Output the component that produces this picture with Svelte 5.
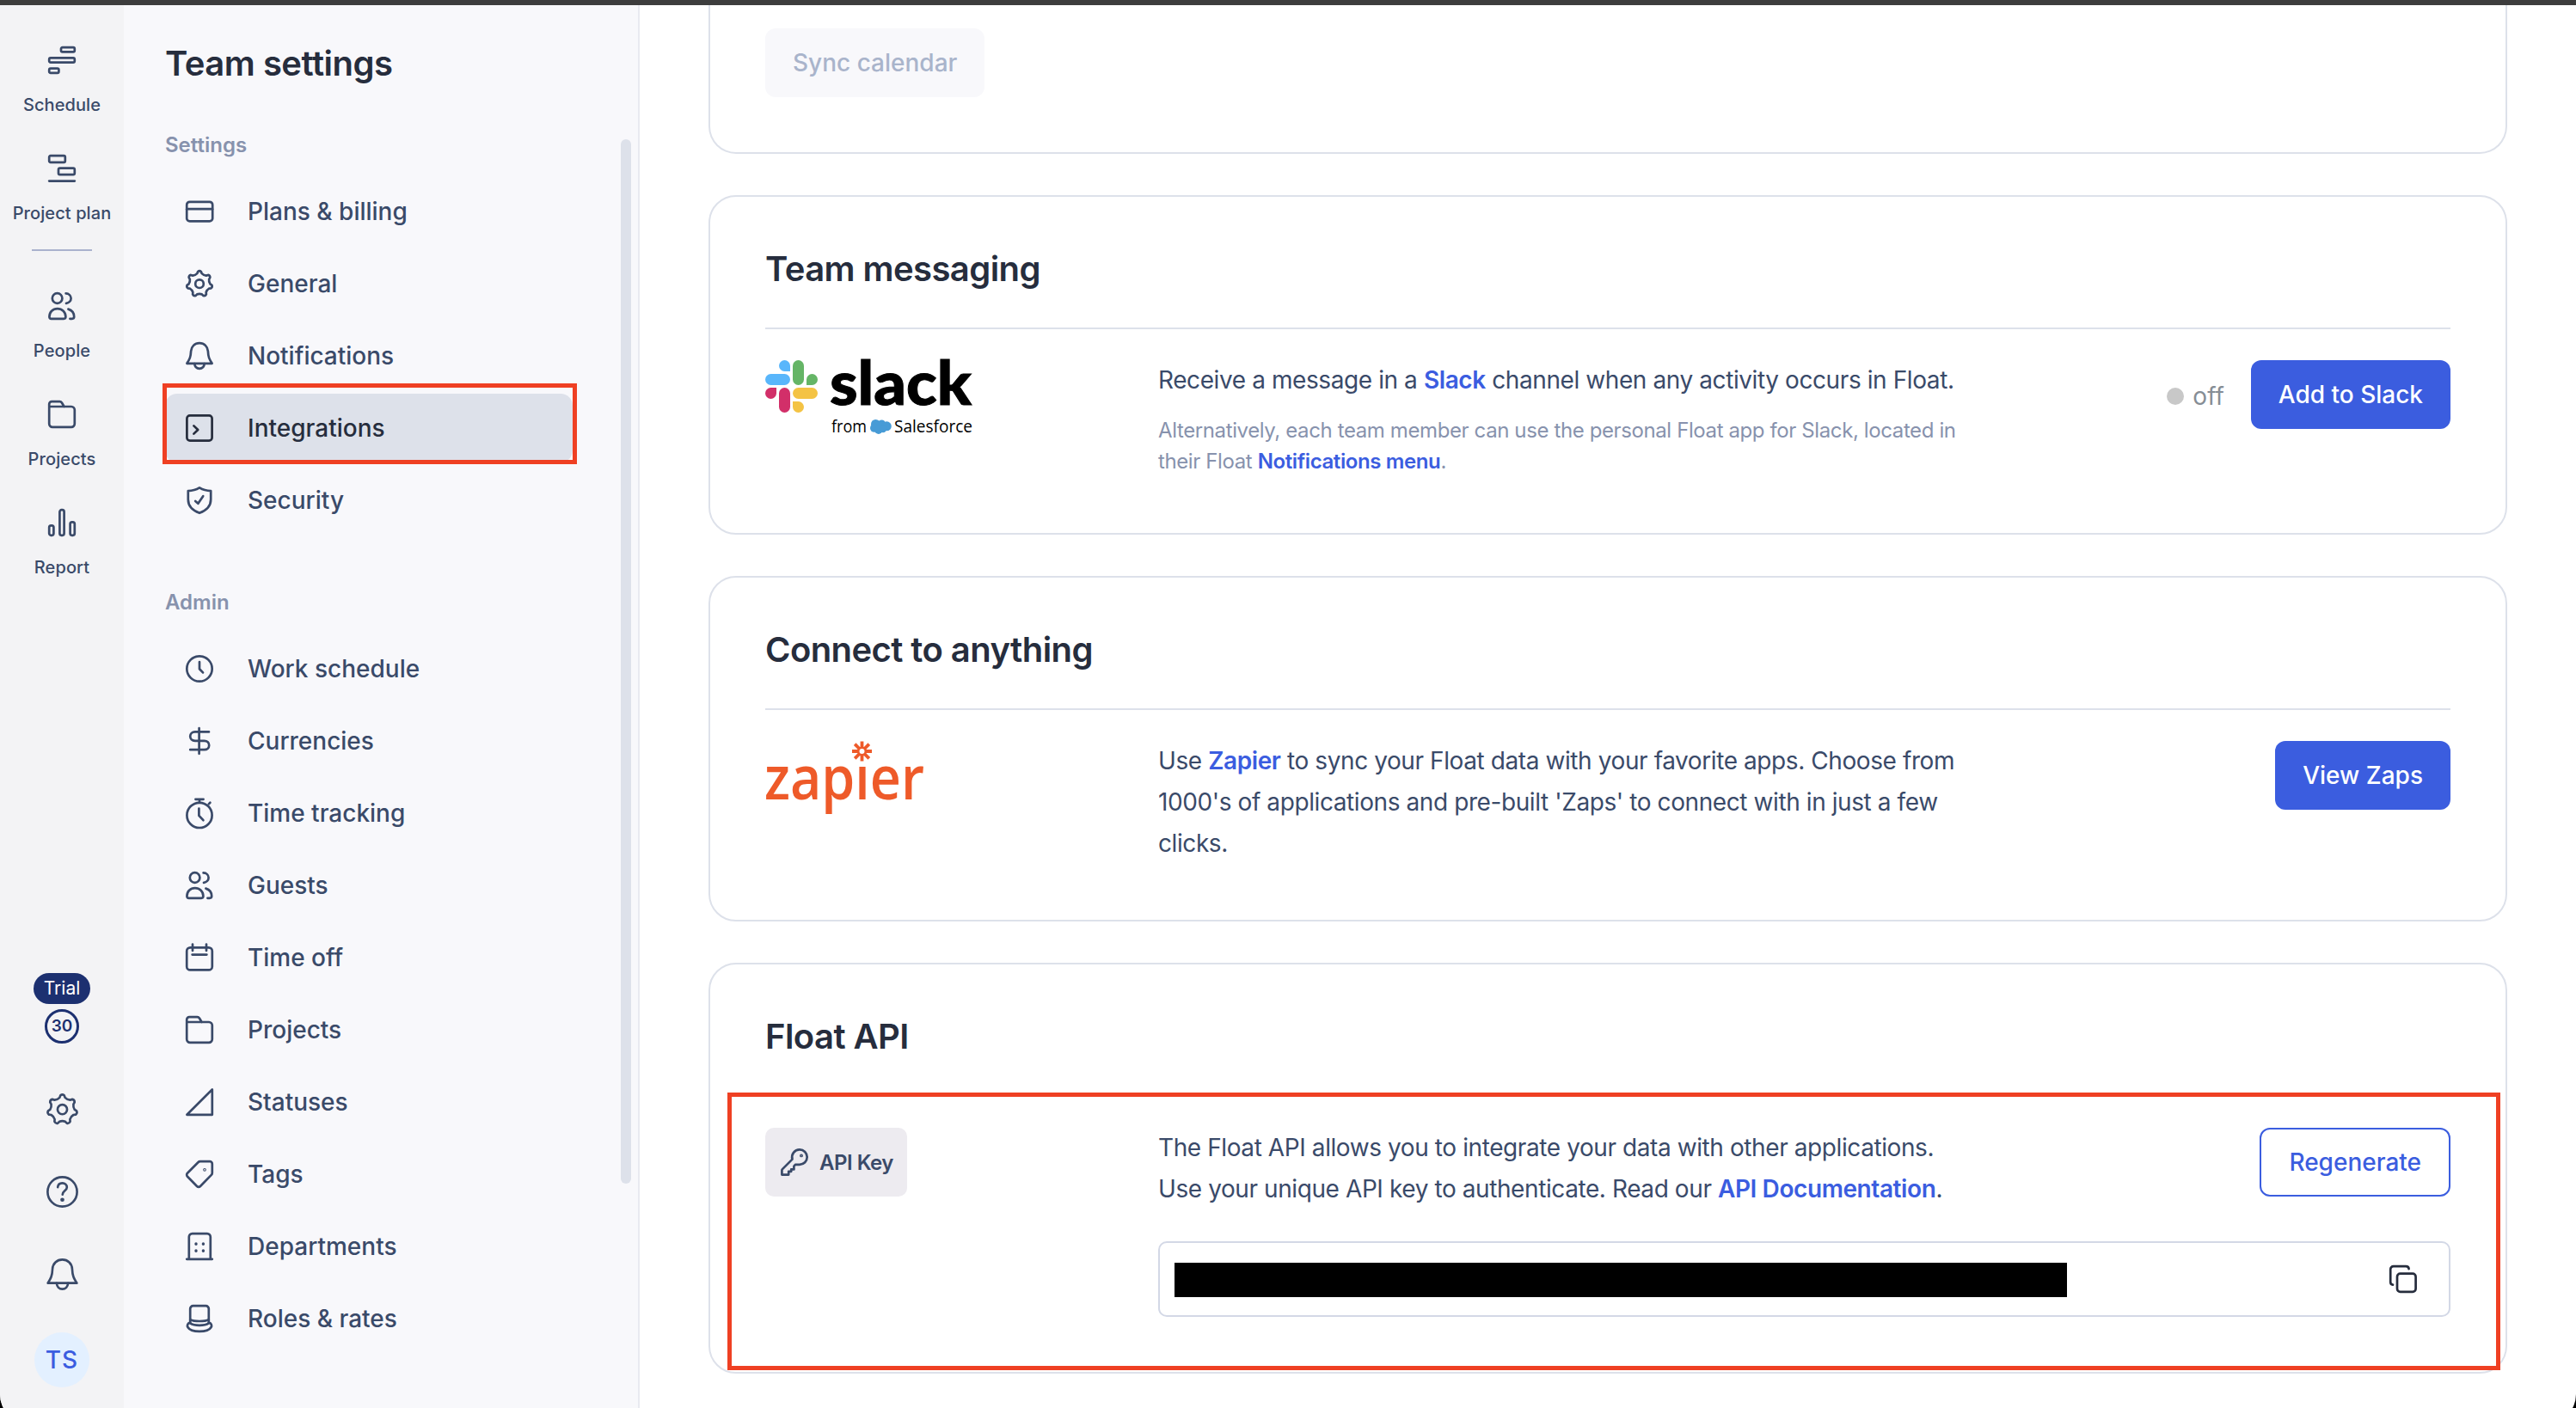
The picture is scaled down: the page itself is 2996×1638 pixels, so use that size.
<script>
  const mainNav = [
    { label: 'Schedule', icon: 'schedule' },
    { label: 'Project plan', icon: 'plan', divider: true },
    { label: 'People', icon: 'people' },
    { label: 'Projects', icon: 'folder' },
    { label: 'Report', icon: 'report' }
  ];

  const groups = [
    {
      title: 'Settings',
      items: [
        { label: 'Plans & billing', icon: 'card' },
        { label: 'General', icon: 'gear' },
        { label: 'Notifications', icon: 'bell' },
        { label: 'Integrations', icon: 'integrations' },
        { label: 'Security', icon: 'shield' }
      ]
    },
    {
      title: 'Admin',
      items: [
        { label: 'Work schedule', icon: 'clock' },
        { label: 'Currencies', icon: 'dollar' },
        { label: 'Time tracking', icon: 'stopwatch' },
        { label: 'Guests', icon: 'people' },
        { label: 'Time off', icon: 'calendar' },
        { label: 'Projects', icon: 'folder' },
        { label: 'Statuses', icon: 'triangle' },
        { label: 'Tags', icon: 'tag' },
        { label: 'Departments', icon: 'building' },
        { label: 'Roles & rates', icon: 'hat' }
      ]
    }
  ];

  let activePage = $state('Integrations');

  // Seven rounded teeth around (16, 16)
  function gearPath() {
    const step = (Math.PI * 2) / 7;
    const at = (r, a) => `${(16 + r * Math.sin(a)).toFixed(2)} ${(16.3 - r * Math.cos(a)).toFixed(2)}`;
    let d = '';
    for (let i = 0; i < 7; i++) {
      const a = i * step;
      d += `${i ? 'L' : 'M'}${at(14.4, a - 0.13)}Q${at(15.8, a)} ${at(14.4, a + 0.13)}`;
      d += `L${at(12.4, a + 0.22)}Q${at(11, a + step / 2)} ${at(12.4, a + step - 0.22)}`;
    }
    return d + 'Z';
  }

  const gear = gearPath();
</script>

{#snippet icon(name)}
  <svg class="icon" viewBox="0 0 32 32" fill="none" stroke="currentColor" stroke-width="2.7" stroke-linecap="round" stroke-linejoin="round">
    {#if name === 'schedule'}
      <rect x="15" y="1.2" width="15.8" height="5.2" rx="1.6" />
      <rect x="1.2" y="13.4" width="29.6" height="5.2" rx="1.6" />
      <rect x="1.2" y="25.6" width="11.2" height="5.2" rx="1.6" />
    {:else if name === 'plan'}
      <rect x="1.2" y="1.2" width="18.6" height="7.6" rx="1.6" />
      <rect x="12" y="15.6" width="18.8" height="7.6" rx="1.6" />
      <path d="M1.2 30.6H30.8" />
    {:else if name === 'people'}
      <circle cx="10.6" cy="7" r="5.8" />
      <path d="M20.6 1.4C24 1.6 26.6 4 26.6 7s-2.4 5.4-5.6 5.8" />
      <path d="M1.4 28.6C1.4 23 5.4 19.2 10.8 19.2s9.6 3.8 9.6 9.4c0 1.3-.8 2.2-2.2 2.2H3.6c-1.4 0-2.2-.9-2.2-2.2z" />
      <path d="M23.4 19.6c4 1.2 6.8 4.6 6.8 9 0 1.4-1 2.2-2.4 2.2h-2.4" />
    {:else if name === 'folder'}
      <path d="M1.2 7V4.2a3 3 0 0 1 3-3h9.2a3 3 0 0 1 2.5 1.3L18.6 7M1.2 7H27a3.8 3.8 0 0 1 3.8 3.8V27a3.8 3.8 0 0 1-3.8 3.8H5A3.8 3.8 0 0 1 1.2 27z" />
    {:else if name === 'report'}
      <rect x="1.2" y="19.4" width="5.2" height="11.4" rx="2.2" />
      <rect x="13.4" y="1.2" width="5.2" height="29.6" rx="2.2" />
      <rect x="25.6" y="15.4" width="5.2" height="15.4" rx="2.2" />
    {:else if name === 'card'}
      <rect x="1.2" y="4.8" width="30" height="22.6" rx="3.4" />
      <path d="M1.2 13.2H31" />
    {:else if name === 'gear'}
      <path d={gear} />
      <circle cx="16" cy="16.2" r="4.8" />
    {:else if name === 'bell'}
      <path d="M16 1.2c-5.600 0-9.600 4-9.900 9.400C5.800 17.600 4.600 19.600 1.400 24.800H30.600C27.400 19.600 26.200 17.600 25.900 10.600 25.600 5.200 21.600 1.200 16 1.200z" />
      <path d="M10.2 25c.4 3.400 2.600 5.800 5.800 5.800s5.400-2.400 5.800-5.800" />
    {:else if name === 'integrations'}
      <rect x="1.4" y="1.4" width="29.2" height="29.2" rx="3.4" />
      <path d="M9.4 13.4l4.800 4.600-4.800 4.600" />
    {:else if name === 'shield'}
      <path d="M16 1.4c4 2.400 8.400 3.600 13.200 3.800V15c0 7.800-5 12.800-13.200 15.800C7.800 27.800 2.800 22.800 2.800 15V5.200C7.600 5 12 3.800 16 1.400z" />
      <path d="M11.200 17l3.200 2.800 5.800-8.600" />
    {:else if name === 'clock'}
      <circle cx="16" cy="16" r="14.700" />
      <path d="M16 8v8.200l4 4.200" />
    {:else if name === 'dollar'}
      <path d="M15.600 1.200V30.800M27 5.400H10.800c-3.400 0-5.600 2.200-5.600 5.200s2.200 5.200 5.600 5.200H21.600c3.400 0 5.600 2.200 5.600 5.200s-2.200 5.200-5.600 5.200H5.200" />
    {:else if name === 'stopwatch'}
      <circle cx="16" cy="18.400" r="14.600" />
      <path d="M15.400 10.600v8.200l5 5.400M11.400-.2h9.200M16 0v3M26.800 5.400l1.600-1.600" />
    {:else if name === 'calendar'}
      <rect x="1.200" y="4.400" width="29.600" height="26" rx="4" />
      <path d="M8 .6V8M24 .6V8M7.600 12.600H24.400" />
    {:else if name === 'triangle'}
      <path d="M30.800 1.400V30.800H1.400z" />
    {:else if name === 'tag'}
      <path d="M16.800 1.200H28a2.800 2.800 0 0 1 2.800 2.800V14.400c0 1-.3 1.800-1 2.500L17 30a2.800 2.800 0 0 1-4 0L2 18.800a2.800 2.800 0 0 1 0-4L14.400 2.200c.7-.7 1.400-1 2.400-1z" />
      <circle cx="22" cy="10.800" r=".5" />
    {:else if name === 'building'}
      <path d="M3.800 30.400V5a3.800 3.800 0 0 1 3.800-3.800H25A3.800 3.800 0 0 1 28.800 5V30.400M1.200 30.800H30.800" />
      <path stroke-width="3.400" d="M12 13v.2M20.400 13v.2M12 21v.2M20.400 21v.2" />
    {:else if name === 'hat'}
      <path d="M5.200 20V4.600a3.400 3.400 0 0 1 3.400-3.400H23.400a3.400 3.400 0 0 1 3.400 3.400V20" />
      <path d="M5.200 17.200c5 2.400 16.600 2.400 21.600 0M5.200 21.400c5 3.200 16.600 3.200 21.600 0" />
      <path d="M5.200 20.600C-.6 22 .4 30.800 16 30.800S32.600 22 26.800 20.600" />
    {:else if name === 'help'}
      <circle cx="16" cy="16" r="14.800" />
      <path d="M11.400 11.400c.2-2.600 2-4.200 4.600-4.200s4.600 1.700 4.600 4.200c0 3.400-4.400 3.800-4.400 7.400" />
      <circle cx="16" cy="24" r=".9" fill="currentColor" />
    {:else if name === 'key'}
      <path d="M22 1.400a8.800 8.800 0 0 0-8.500 11.200L2 24.100a2 2 0 0 0-.6 1.400V30.600H9.200V26.800H12.200V24.400H15.400V20.600L17.200 18.800H22A8.700 8.700 0 1 0 22 1.400z" />
      <circle cx="24" cy="8.400" r=".6" fill="currentColor" />
    {:else if name === 'copy'}
      <rect x="9" y="9.600" width="21.600" height="21.200" rx="3.600" />
      <path d="M4 22.600c-1.800-.2-2.800-1.400-2.800-3.200V4.800c0-2.200 1.400-3.600 3.600-3.600H19.200c2 0 3.200 1 3.400 3" />
    {/if}
  </svg>
{/snippet}

<div class="screen">
  <div class="window">
    <div class="topbar"></div>
    <div class="app">
      <nav class="rail">
        {#each mainNav as item}
          <a class="rail-item" href="#{item.icon}">
            {@render icon(item.icon)}
            <span>{item.label}</span>
          </a>
          {#if item.divider}
            <hr />
          {/if}
        {/each}
        <div class="rail-bottom">
          <span class="trial">Trial</span>
          <span class="days">30</span>
          <button class="rail-btn">{@render icon('gear')}</button>
          <button class="rail-btn">{@render icon('help')}</button>
          <button class="rail-btn">{@render icon('bell')}</button>
          <span class="avatar">TS</span>
        </div>
      </nav>

      <aside class="sidebar">
        <h1>Team settings</h1>
        {#each groups as group}
          <section class="group">
            <h2>{group.title}</h2>
            {#each group.items as item}
              <button class="side-item" class:active={activePage === item.label} onclick={() => (activePage = item.label)}>
                {@render icon(item.icon)}
                <span>{item.label}</span>
                {#if item.label === 'Integrations'}
                  <i class="mark"></i>
                {/if}
              </button>
            {/each}
          </section>
        {/each}
        <div class="scrollbar"></div>
      </aside>

      <main>
        <section class="card calendar-card">
          <button class="btn disabled" disabled>Sync calendar</button>
        </section>

        <section class="card slack-card">
          <h3>Team messaging</h3>
          <div class="row">
            <div class="logo">
              <svg width="260" height="96" viewBox="0 0 260 96">
                <g fill="#59b6fb">
                  <path d="M22.500 0a6.500 6.500 0 0 1 6.500 6.500V13H22.500a6.500 6.500 0 0 1 0-13z" />
                  <rect x="0" y="16" width="29" height="13" rx="6.500" />
                </g>
                <g fill="#65b566">
                  <rect x="32" y="0" width="13" height="29" rx="6.500" />
                  <path d="M48 29V22.500A6.500 6.500 0 1 1 54.500 29z" />
                </g>
                <g fill="#d22f69">
                  <path d="M13 32v6.500A6.500 6.500 0 1 1 6.500 32z" />
                  <rect x="16" y="32" width="13" height="29" rx="6.500" />
                </g>
                <g fill="#f4c344">
                  <rect x="32" y="32" width="29" height="13" rx="6.500" />
                  <path d="M32 48h6.500A6.500 6.500 0 1 1 32 54.500z" />
                </g>
                <text class="slack-word" x="75" y="51.500" textLength="165" lengthAdjust="spacingAndGlyphs">slack</text>
                <text class="slack-from" x="77" y="84" textLength="41" lengthAdjust="spacingAndGlyphs">from</text>
                <g fill="#479bd6">
                  <circle cx="128.500" cy="74.500" r="5.500" />
                  <circle cx="135.500" cy="74" r="4.500" />
                  <circle cx="141.300" cy="76.800" r="5.500" />
                  <circle cx="126.800" cy="79" r="4.800" />
                  <circle cx="131.800" cy="81.300" r="4.700" />
                  <circle cx="137" cy="80" r="4.200" />
                </g>
                <text class="slack-from" x="150" y="84" textLength="91" lengthAdjust="spacingAndGlyphs">Salesforce</text>
              </svg>
            </div>
            <div class="desc">
              <p>Receive a message in a <a href="#slack">Slack</a> channel when any activity occurs in Float.</p>
              <p class="note">Alternatively, each team member can use the personal Float app for Slack, located in<br />their Float <a href="#notifications">Notifications menu</a>.</p>
            </div>
            <div class="actions">
              <span class="status"><i></i>off</span>
              <button class="btn primary">Add to Slack</button>
            </div>
          </div>
        </section>

        <section class="card zapier-card">
          <h3>Connect to anything</h3>
          <div class="row">
            <div class="logo">
              <svg width="200" height="96" viewBox="0 0 200 96">
                <text class="zapier-word" x="-1" y="68" textLength="186" lengthAdjust="spacingAndGlyphs">zap&#305;er</text>
                <g stroke="#ee5a29" stroke-width="3.800" transform="translate(112.500 12)">
                  <path d="M0-11.500V-4M0 4V11.500M-11.500 0H-4M4 0H11.500M-8.300-8.300L-3-3M3 3L8.300 8.300M-8.300 8.300L-3 3M3-3L8.300-8.300" />
                  <circle r="4.300" fill="none" stroke-width="2.600" />
                </g>
              </svg>
            </div>
            <div class="desc">
              <p>Use <a href="#zapier">Zapier</a> to sync your Float data with your favorite apps. Choose from<br />1000's of applications and pre-built 'Zaps' to connect with in just a few<br />clicks.</p>
            </div>
            <div class="actions">
              <button class="btn primary">View Zaps</button>
            </div>
          </div>
        </section>

        <section class="card api-card">
          <h3>Float API</h3>
          <div class="row">
            <div class="logo">
              <span class="api-key">{@render icon('key')}API Key</span>
            </div>
            <div class="desc">
              <p>The Float API allows you to integrate your data with other applications.<br />Use your unique API key to authenticate. Read our <a href="#docs">API Documentation</a>.</p>
            </div>
            <div class="actions">
              <button class="btn outline">Regenerate</button>
            </div>
          </div>
          <div class="key-field">
            <div class="redacted"></div>
            {@render icon('copy')}
          </div>
          <i class="mark"></i>
        </section>
      </main>
    </div>
  </div>
</div>

<style>
  .screen {
    width: 2996px;
    height: 1638px;
    overflow: hidden;
    background: #000;
  }

  /* runs past the screen, so only the start of the rounded corners shows */
  .window {
    width: 2996px;
    height: 1656px;
    overflow: hidden;
    background: #fff;
    border-radius: 0 0 34px 34px;
    font-family: Inter, sans-serif;
    font-size: 28px;
    color: #3a4a69;
  }

  .topbar {
    height: 6px;
    background: #3d3d3d;
  }

  .app {
    display: flex;
    height: 1650px;
  }

  a {
    text-decoration: none;
  }

  button {
    font: inherit;
    color: inherit;
    background: none;
    border: 0;
    padding: 0;
  }

  h1,
  h2,
  h3,
  p {
    margin: 0;
  }

  .icon {
    display: block;
    flex: none;
    width: 32px;
    height: 32px;
    overflow: visible;
  }

  .mark {
    position: absolute;
    border: 5px solid #ef4023;
    pointer-events: none;
  }

  /* left rail */
  .rail {
    display: flex;
    flex-direction: column;
    align-items: center;
    box-sizing: border-box;
    width: 144px;
    padding-top: 48px;
    background: #f3f3f5;
  }

  .rail-item {
    display: flex;
    flex-direction: column;
    align-items: center;
    gap: 22px;
    height: 126px;
    color: inherit;
    font-size: 20px;
    font-weight: 500;
    line-height: 28px;
    letter-spacing: 0.1px;
    white-space: nowrap;
  }

  .rail hr {
    width: 70px;
    height: 2px;
    margin: -16px 0 48px;
    border: 0;
    background: #aab2cd;
  }

  .rail-bottom {
    display: flex;
    flex-direction: column;
    align-items: center;
    margin-top: auto;
    margin-bottom: 42px;
  }

  .trial {
    width: 66px;
    border-radius: 18px;
    background: #1c3070;
    color: #fff;
    font-size: 21px;
    line-height: 36px;
    text-align: center;
  }

  .days {
    box-sizing: border-box;
    width: 40px;
    height: 40px;
    margin: 6px 0 57px;
    border: 3px solid #1c3070;
    border-radius: 50%;
    color: #1c3070;
    font-size: 19px;
    font-weight: 600;
    line-height: 34px;
    text-align: center;
  }

  .rail-btn {
    height: 38px;
    margin-bottom: 58px;
  }

  .rail-btn .icon {
    width: 37px;
    height: 37px;
    stroke-width: 2.3;
  }

  .avatar {
    width: 64px;
    margin-top: -9px;
    border-radius: 50%;
    background: #e3f0ff;
    color: #3b5de0;
    font-size: 28px;
    font-weight: 500;
    line-height: 64px;
    letter-spacing: 1px;
    text-align: center;
  }

  /* settings sidebar */
  .sidebar {
    position: relative;
    box-sizing: border-box;
    width: 600px;
    padding: 38px 76px 0 48px;
    border-right: 2px solid #e9eaf0;
    background: #f8f8fb;
  }

  .sidebar h1 {
    margin-bottom: 55px;
    color: #262d3d;
    font-size: 40px;
    font-weight: 600;
    line-height: 60px;
    letter-spacing: -0.5px;
  }

  .group {
    display: flex;
    flex-direction: column;
    gap: 4px;
    margin-bottom: 69px;
  }

  .group h2 {
    height: 20px;
    margin-bottom: 23px;
    color: #8792ad;
    font-size: 24px;
    font-weight: 600;
    line-height: 20px;
  }

  .side-item {
    position: relative;
    display: flex;
    align-items: center;
    gap: 40px;
    height: 80px;
    padding: 0 24px;
    border-radius: 14px;
    font-weight: 500;
    text-align: left;
  }

  .side-item.active {
    background: #dde1ea;
    color: #262d3d;
  }

  .side-item .mark {
    inset: -12px -5px -2px -3px;
  }

  .scrollbar {
    position: absolute;
    top: 156px;
    right: 8px;
    width: 12px;
    height: 1215px;
    border-radius: 6px;
    background: #dde1ea;
  }

  /* content */
  main {
    display: flex;
    flex: 1;
    flex-direction: column;
    gap: 48px;
    padding: 0 80px;
  }

  .card {
    position: relative;
    box-sizing: border-box;
    padding: 0 64px;
    border: 2px solid #dde1ea;
    border-radius: 32px;
  }

  .calendar-card {
    height: 173px;
    padding-top: 27px;
    border-top: 0;
    border-radius: 0 0 32px 32px;
  }

  .slack-card {
    height: 395px;
  }

  .zapier-card {
    height: 402px;
  }

  .api-card {
    height: 478px;
  }

  .card h3 {
    padding: 54px 0 38px;
    border-bottom: 2px solid #dde1ea;
    color: #262d3d;
    font-size: 40px;
    font-weight: 600;
    line-height: 60px;
    letter-spacing: -0.57px;
  }

  .row {
    display: flex;
    align-items: flex-start;
    padding-top: 36px;
  }

  .logo {
    flex: none;
    width: 457px;
  }

  .logo svg {
    display: block;
    overflow: visible;
  }

  .desc {
    flex: 1;
    margin-top: -1px;
    line-height: 48px;
    letter-spacing: -0.41px;
    white-space: nowrap;
  }

  .desc a {
    color: #3b5de0;
    font-weight: 600;
  }

  .note {
    margin-top: 17px;
    color: #8792ad;
    font-size: 24px;
    line-height: 36px;
    letter-spacing: -0.39px;
  }

  .actions {
    display: flex;
    align-items: center;
    gap: 31px;
  }

  .status {
    display: flex;
    align-items: center;
    gap: 10px;
    padding-top: 4px;
    color: #868d95;
  }

  .status i {
    width: 20px;
    height: 20px;
    border-radius: 50%;
    background: #c8c8c8;
  }

  .btn {
    height: 80px;
    padding: 0 32px;
    border-radius: 12px;
    font-weight: 500;
    white-space: nowrap;
  }

  .btn.disabled {
    background: #f8f8fb;
    color: #a9b4cb;
  }

  .btn.primary {
    background: #3b5ddf;
    color: #fff;
  }

  .btn.outline {
    border: 2px solid #3b5ddf;
    color: #3b5ddf;
  }

  .slack-word {
    font-family: Lato, sans-serif;
    font-size: 70px;
    font-weight: 900;
    stroke: #000;
    stroke-width: 1;
  }

  .slack-from {
    font-family: 'Open Sans', sans-serif;
    font-size: 20px;
  }

  .zapier-word {
    font-family: 'Open Sans', sans-serif;
    font-size: 70px;
    font-weight: 600;
    fill: #ee5a29;
  }

  .api-key {
    display: inline-flex;
    align-items: center;
    gap: 13px;
    box-sizing: border-box;
    width: 165px;
    height: 80px;
    padding-left: 18px;
    border-radius: 10px;
    background: #edebf0;
    font-size: 24px;
    font-weight: 600;
    letter-spacing: -0.5px;
    white-space: nowrap;
  }

  .key-field {
    display: flex;
    align-items: center;
    justify-content: space-between;
    box-sizing: border-box;
    height: 88px;
    margin: 37px 0 0 457px;
    padding: 0 37px 0 17px;
    border: 2px solid #d3d8e6;
    border-radius: 10px;
    color: #262d3d;
  }

  .redacted {
    width: 1038px;
    height: 40px;
    margin-top: 2px;
    background: #000;
  }

  .api-card .mark {
    inset: 149px 6px 2px 20px;
  }
</style>
